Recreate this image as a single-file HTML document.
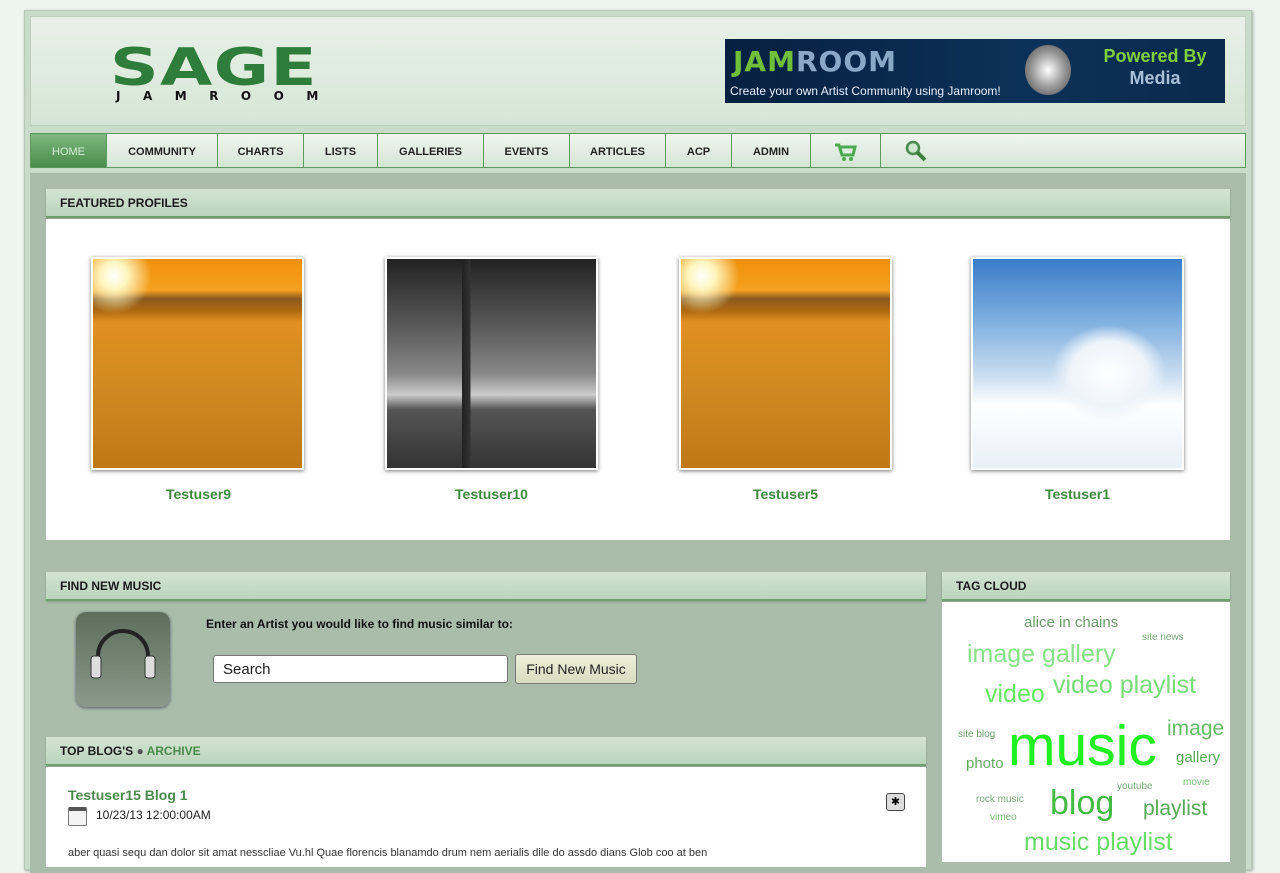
<!DOCTYPE html>
<html><head><meta charset="utf-8"><style>
*{margin:0;padding:0;box-sizing:border-box}
body{width:1280px;height:853px;overflow:hidden;background:#eef4ee;font-family:"Liberation Sans",sans-serif;position:relative}
.abs{position:absolute}
#outer{left:24px;top:10px;width:1228px;height:860px;background:#c9dcc9;border:1px solid #b4c8b4;box-shadow:1px 1px 3px #9aaa9a}
#head{left:30px;top:16px;width:1216px;height:110px;background:linear-gradient(#e8f1e8,#d6e6d6);border:1px solid #bcd0bc}
#nav{left:30px;top:133px;width:1216px;height:35px;background:linear-gradient(#f0f6f0,#d4e5d4);border:1px solid #5e9a5e;display:flex}
#nav div{height:33px;line-height:36px;font-size:11px;font-weight:bold;color:#222;text-align:center;border-right:1px solid #5e9a5e}
#body{left:30px;top:173px;width:1216px;height:700px;background:#aabdaa}
.hd{position:absolute;height:29px;background:linear-gradient(#d3e4d3,#bcd4bc);border-bottom:2px solid #6ea06e;font-size:12px;font-weight:bold;color:#1a1a1a;line-height:29px;padding-left:14px;box-shadow:0 1px 2px #889888;font-family:"Liberation Sans Narrow","Liberation Sans",sans-serif}
.ph{position:absolute;top:257px;width:213px;height:213px;border:2px solid #fff;box-shadow:0 1px 4px #777}
.nm{position:absolute;top:486px;width:213px;text-align:center;font-size:14px;font-weight:bold;color:#3f8a3f}
.t{position:absolute;white-space:nowrap;line-height:1}
</style></head><body>
<div id="outer" class="abs"></div>
<div id="head" class="abs"></div>
<div class="abs" style="left:110px;top:38px;font-family:'DejaVu Sans',sans-serif;font-weight:bold;font-size:52px;color:#2e7d3a;letter-spacing:1px;line-height:60px;transform:scaleX(1.3);transform-origin:left">SAGE</div>
<div class="abs" style="left:116px;top:89px;font-family:'DejaVu Sans',sans-serif;font-weight:bold;font-size:12px;color:#111;letter-spacing:22.5px">JAMROOM</div>
<div class="abs" style="left:725px;top:39px;width:500px;height:64px;background:linear-gradient(90deg,#062040,#0c3158 60%,#0a2a4c);">
 <div class="abs" style="left:8px;top:6px;font-family:'DejaVu Sans',sans-serif;font-weight:bold;font-size:28px;letter-spacing:1px;color:#6fbf3a">JAM<span style="color:#8aa8c8">ROOM</span></div>
 <div class="abs" style="left:5px;top:45px;font-size:12px;color:#e8f0ff">Create your own Artist Community using Jamroom!</div>
 <div class="abs" style="left:300px;top:6px;width:46px;height:50px;border-radius:50%;background:radial-gradient(#fff,#999 50%,#444)"></div>
 <div class="abs" style="left:365px;top:6px;width:130px;text-align:center;font-weight:bold;font-size:18px;color:#7fd03a;line-height:22px">Powered By<br><span style="color:#a8c0d8">Media</span></div>
</div>
<div id="nav" class="abs">
 <div style="width:76px;background:linear-gradient(#7fb87f,#4a8c4a);color:#d8ecd8;font-weight:normal">HOME</div>
 <div style="width:111px">COMMUNITY</div><div style="width:86px">CHARTS</div><div style="width:74px">LISTS</div><div style="width:106px">GALLERIES</div><div style="width:86px">EVENTS</div><div style="width:96px">ARTICLES</div><div style="width:66px">ACP</div><div style="width:79px">ADMIN</div>
 <div style="width:70px"><svg width="24" height="20" viewBox="0 0 24 20" style="margin-top:8px"><path d="M1 3h4l3 10h11l2-8H7" fill="none" stroke="#4caa4c" stroke-width="3"/><circle cx="10" cy="17" r="2" fill="#4caa4c"/><circle cx="17" cy="17" r="2" fill="#4caa4c"/></svg></div>
 <div style="width:70px;border:none"><svg width="24" height="24" viewBox="0 0 24 24" style="margin-top:5px"><circle cx="9" cy="9" r="6" fill="#cfe6cf" stroke="#4a8a4a" stroke-width="2.5"/><path d="M13 13l8 8" stroke="#3e7e3e" stroke-width="4"/></svg></div>
</div>
<div id="body" class="abs"></div>
<div class="hd" style="left:46px;top:189px;width:1184px">FEATURED PROFILES</div>
<div class="abs" style="left:46px;top:219px;width:1184px;height:321px;background:#fff"></div>
<div class="ph" style="left:91px;background:radial-gradient(circle at 10% 8%,#fff 0,#fff6c0 5%,transparent 14%),linear-gradient(#f0900a 0%,#f5a020 15%,#8a5a20 19%,#b06a10 25%,#e09020 30%,#d08a20 60%,#c07818 100%)"></div>
<div class="ph" style="left:385px;background:linear-gradient(90deg,transparent 36%,#222 36%,#333 40%,transparent 40%),linear-gradient(#222 0%,#555 30%,#888 55%,#ccc 65%,#555 72%,#333 100%)"></div>
<div class="ph" style="left:679px;background:radial-gradient(circle at 10% 8%,#fff 0,#fff6c0 5%,transparent 14%),linear-gradient(#f0900a 0%,#f5a020 15%,#8a5a20 19%,#b06a10 25%,#e09020 30%,#d08a20 60%,#c07818 100%)"></div>
<div class="ph" style="left:971px;background:radial-gradient(ellipse at 65% 55%,#fff 0,#eef4fa 20%,transparent 30%),linear-gradient(#3a7cc8 0%,#7fb0e0 30%,#c8dcf0 55%,#fff 70%,#e8f0f8 100%)"></div>
<div class="nm" style="left:92px">Testuser9</div>
<div class="nm" style="left:385px">Testuser10</div>
<div class="nm" style="left:679px">Testuser5</div>
<div class="nm" style="left:971px">Testuser1</div>

<div class="hd" style="left:46px;top:572px;width:880px">FIND NEW MUSIC</div>
<div class="abs" style="left:76px;top:612px;width:94px;height:95px;border-radius:10px;background:linear-gradient(#5d6e5d,#8a9a8a);box-shadow:0 1px 3px #556">
 <svg width="94" height="95" viewBox="0 0 94 95"><path d="M22 58V44a25 25 0 0 1 50 0v14" fill="none" stroke="#222" stroke-width="4"/><rect x="15" y="44" width="10" height="22" rx="3" fill="#ddd" stroke="#333"/><rect x="69" y="44" width="10" height="22" rx="3" fill="#ddd" stroke="#333"/></svg></div>
<div class="abs" style="left:206px;top:617px;font-size:12px;font-weight:bold;color:#111">Enter an Artist you would like to find music similar to:</div>
<div class="abs" style="left:213px;top:655px;width:295px;height:28px;background:#fff;border:1px solid #777;border-radius:3px;font-size:15px;padding:5px 9px;color:#222">Search</div>
<div class="abs" style="left:515px;top:654px;width:122px;height:30px;background:linear-gradient(#eef0dc,#d8dcc0);border:1px solid #777;border-radius:3px;font-size:14px;text-align:center;line-height:28px;color:#222">Find New Music</div>

<div class="hd" style="left:46px;top:737px;width:880px">TOP BLOG'S <span style="color:#555">●</span> <span style="color:#4a8a4a">ARCHIVE</span></div>
<div class="abs" style="left:46px;top:767px;width:880px;height:100px;background:#fff"></div>
<div class="abs" style="left:68px;top:787px;font-size:14px;font-weight:bold;color:#4a8a4a">Testuser15 Blog 1</div>
<div class="abs" style="left:68px;top:807px;width:19px;height:19px;border:1px solid #777;border-top:4px solid #555;border-radius:2px;background:#f4f4f4"></div>
<div class="abs" style="left:96px;top:808px;font-size:12px;color:#222">10/23/13 12:00:00AM</div>
<div class="abs" style="left:886px;top:793px;width:19px;height:18px;border:1px solid #444;border-radius:3px;background:#ddd;text-align:center;font-size:11px;line-height:16px">✱</div>
<div class="abs" style="left:68px;top:847px;font-size:11px;color:#333">aber quasi sequ dan dolor sit amat nesscliae Vu.hl Quae florencis blanamdo drum nem aerialis dile do assdo dians Glob coo at ben</div>

<div class="hd" style="left:942px;top:572px;width:288px">TAG CLOUD</div>
<div class="abs" style="left:942px;top:602px;width:288px;height:260px;background:#fff"></div>
<div class="t" style="left:1024px;top:615px;font-size:15px;color:#6a9a6a">alice in chains</div>
<div class="t" style="left:1142px;top:633px;font-size:10px;color:#7aaa7a">site news</div>
<div class="t" style="left:967px;top:642px;font-size:25px;color:#88e288">image gallery</div>
<div class="t" style="left:985px;top:682px;font-size:25px;color:#66ea66">video</div>
<div class="t" style="left:1053px;top:673px;font-size:25px;color:#77dd77">video playlist</div>
<div class="t" style="left:958px;top:730px;font-size:10px;color:#6a9a6a">site blog</div>
<div class="t" style="left:1008px;top:718px;font-size:57px;color:#1ff01f">music</div>
<div class="t" style="left:1167px;top:718px;font-size:21px;color:#66bb66">image</div>
<div class="t" style="left:966px;top:756px;font-size:15px;color:#66aa66">photo</div>
<div class="t" style="left:1176px;top:750px;font-size:15px;color:#55aa55">gallery</div>
<div class="t" style="left:1117px;top:782px;font-size:10px;color:#77aa77">youtube</div>
<div class="t" style="left:1183px;top:778px;font-size:10px;color:#77bb77">movie</div>
<div class="t" style="left:976px;top:795px;font-size:10px;color:#77aa77">rock music</div>
<div class="t" style="left:1050px;top:786px;font-size:34px;color:#44bb44">blog</div>
<div class="t" style="left:1143px;top:798px;font-size:21px;color:#55aa55">playlist</div>
<div class="t" style="left:990px;top:813px;font-size:10px;color:#77bb77">vimeo</div>
<div class="t" style="left:1024px;top:830px;font-size:25px;color:#66dd66">music playlist</div>
</body></html>
